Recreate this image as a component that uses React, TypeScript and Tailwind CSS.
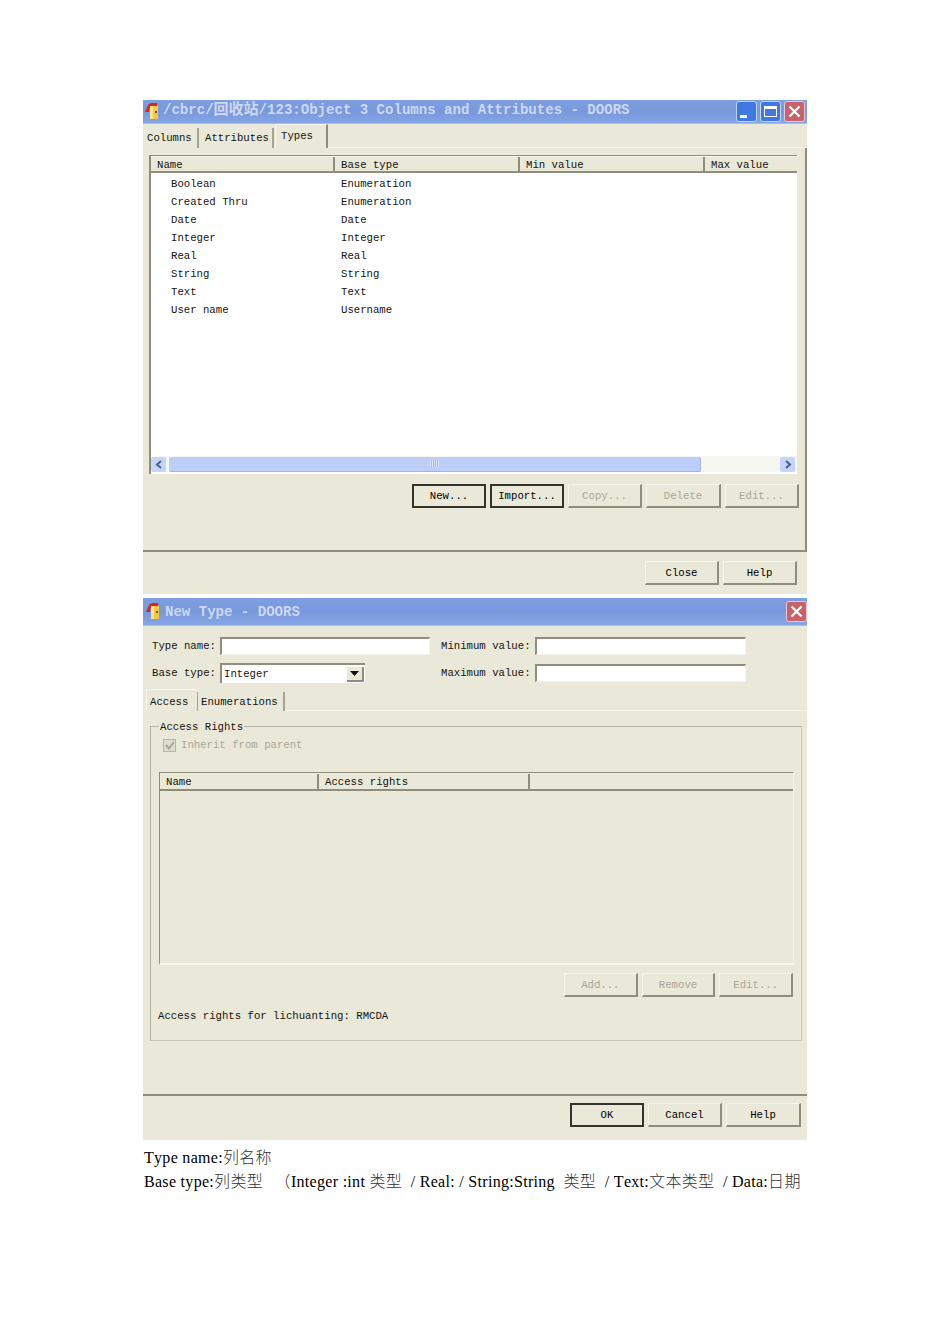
import type { ReactNode } from "react";

const listRows = [
  ["Boolean", "Enumeration"],
  ["Created Thru", "Enumeration"],
  ["Date", "Date"],
  ["Integer", "Integer"],
  ["Real", "Real"],
  ["String", "String"],
  ["Text", "Text"],
  ["User name", "Username"],
];

function DoorIcon() {
  return (
    <svg width="16" height="17" viewBox="0 0 16 17" className="shrink-0">
      <path d="M1 9 L4 2 Q5 0 8 0 L13 0 L13 3 L6 3 L5 9 Z" fill="#d8281c" />
      <rect x="6" y="3" width="8" height="13" fill="#f6c93f" />
      <rect x="6" y="3" width="3" height="13" fill="#fbe58a" />
      <rect x="11" y="8" width="2" height="2" fill="#7a4a10" />
    </svg>
  );
}

function TitleButton({ kind }: { kind: "min" | "max" | "close" }) {
  const color =
    kind === "close"
      ? "bg-[#c9626a] border-[#e8c8d0]"
      : "bg-[#3f78e0] border-[#c4d4f4]";
  return (
    <div className={`flex h-[21px] w-[21px] items-center justify-center rounded-[3px] border ${color}`}>
      {kind === "min" && <div className="mt-[9px] mr-[6px] h-[3px] w-[7px] bg-white" />}
      {kind === "max" && <div className="h-[11px] w-[13px] border border-t-[3px] border-white" />}
      {kind === "close" && (
        <svg width="13" height="13" viewBox="0 0 13 13">
          <path d="M1.5 1.5 L11.5 11.5 M11.5 1.5 L1.5 11.5" stroke="#fff" strokeWidth="2.2" />
        </svg>
      )}
    </div>
  );
}

function TitleBar({
  barClass,
  textClass,
  children,
  buttons,
}: {
  barClass: string;
  textClass: string;
  children: ReactNode;
  buttons: ReactNode;
}) {
  return (
    <div className={`flex ${barClass} items-center border-b border-[#a9bde8] bg-gradient-to-b from-[#7f9fe2] via-[#7898dd] to-[#86a5e6]`}>
      <DoorIcon />
      <div className={`${textClass} flex-1 whitespace-pre text-[14.05px] font-bold text-[#cdd8ef]`}>{children}</div>
      <div className="flex gap-[3px]">{buttons}</div>
    </div>
  );
}

function Btn({ label, state = "normal", w = "w-[74px]" }: { label: string; state?: "normal" | "default" | "disabled"; w?: string }) {
  const look =
    state === "default"
      ? "border-2 border-[#33332c] text-black"
      : state === "disabled"
        ? "border border-[#f6f5ec] border-r-2 border-b-2 border-r-[#8f8d7c] border-b-[#8f8d7c] text-[#a8a798]"
        : "border border-[#f6f5ec] border-r-2 border-b-2 border-r-[#8f8d7c] border-b-[#8f8d7c] text-black";
  return <div className={`flex h-[24px] ${w} items-center justify-center ${look}`}>{label}</div>;
}

function HeaderCell({ label, w }: { label: string; w: string }) {
  return (
    <div className={`${w} h-full border-r-2 border-[#8f8d7c] pl-[6px] leading-[17px] last:border-r-0`}>{label}</div>
  );
}

function TextInput({ w }: { w: string }) {
  return <div className={`h-[18px] ${w} border border-t-2 border-l-2 border-[#f6f5ec] border-t-[#8f8d7c] border-l-[#8f8d7c] bg-white`} />;
}

function Cjk({ children }: { children: ReactNode }) {
  return <span className="font-light text-[#333]">{children}</span>;
}

export default function App() {
  return (
    <div className="min-h-[1344px] bg-white pt-[100px] pl-[143px] font-['Liberation_Mono','Noto_Sans_CJK_SC',monospace] text-[10.67px] text-[#15150f]">
      {/* Object columns window */}
      <div className="h-[494px] w-[664px] bg-[#eae8d8]">
        <TitleBar
          barClass="h-[24px] pl-[1px] pr-[2px]"
          textClass="ml-[3px] pb-[5px]"
          buttons={
            <>
              <TitleButton kind="min" />
              <TitleButton kind="max" />
              <TitleButton kind="close" />
            </>
          }
        >
          /cbrc/<span className="font-['Noto_Sans_CJK_SC',sans-serif] text-[15px]">回收站</span>/123:Object 3 Columns and Attributes - DOORS
        </TitleBar>

        <div className="flex h-[24px] items-end pl-[4px]">
          <div className="flex h-[20px] w-[52px] items-center border-r-2 border-[#a5a392]">Columns</div>
          <div className="flex h-[20px] w-[75px] items-center border-r-2 border-l border-[#a5a392] border-l-transparent pl-[5px]">Attributes</div>
          <div className="ml-[1px] flex h-[24px] w-[53px] items-start border-t border-l border-r-2 border-[#f6f5ec] border-r-[#8f8d7c] pt-[3px] pl-[5px]">Types</div>
          <div className="h-px flex-1 bg-[#f6f5ec]" />
        </div>

        <div className="h-[404px] border-r-2 border-b-2 border-[#8f8d7c] pt-[7px] pl-[6px]">
          {/* Types list */}
          <div className="h-[319px] w-[648px] border-t border-l-2 border-[#8f8d7c] bg-white">
            <div className="flex h-[17px] border-t border-b-2 border-[#8f8d7c] border-t-[#f6f5ec] bg-[#eae8d8]">
              <HeaderCell label="Name" w="w-[184px]" />
              <HeaderCell label="Base type" w="w-[185px]" />
              <HeaderCell label="Min value" w="w-[185px]" />
              <HeaderCell label="Max value" w="flex-1" />
            </div>
            <div className="h-[283px] pt-[2px]">
              {listRows.map(([name, type]) => (
                <div key={name} className="flex h-[18px] items-center">
                  <div className="w-[190px] pl-[20px]">{name}</div>
                  <div>{type}</div>
                </div>
              ))}
            </div>
            {/* Horizontal scrollbar */}
            <div className="flex h-[16px] items-center bg-[#f7f7f2] pr-[2px]">
              <div className="flex h-[15px] w-[15px] items-center justify-center rounded-[2px] bg-[#c4d4fa]">
                <svg width="8" height="9" viewBox="0 0 8 9">
                  <path d="M6 1 L2 4.5 L6 8" fill="none" stroke="#4d6185" strokeWidth="2" />
                </svg>
              </div>
              <div className="ml-[3px] flex h-[15px] w-[532px] items-center justify-center rounded-[2px] border-r border-b border-[#9fb4e4] bg-[#bdcff8]">
                <div className="h-[7px] w-[9px] bg-[repeating-linear-gradient(90deg,#dbe5fb_0,#dbe5fb_1px,#a4b8e8_1px,#a4b8e8_2px)]" />
              </div>
              <div className="flex-1" />
              <div className="flex h-[15px] w-[15px] items-center justify-center rounded-[2px] bg-[#c4d4fa]">
                <svg width="8" height="9" viewBox="0 0 8 9">
                  <path d="M2 1 L6 4.5 L2 8" fill="none" stroke="#4d6185" strokeWidth="2" />
                </svg>
              </div>
            </div>
          </div>

          <div className="mt-[10px] ml-[263px] flex gap-[4px]">
            <Btn label="New..." state="default" />
            <Btn label="Import..." state="default" />
            <Btn label="Copy..." state="disabled" />
            <Btn label="Delete" state="disabled" w="w-[75px]" />
            <Btn label="Edit..." state="disabled" />
          </div>
        </div>

        <div className="mt-[9px] ml-[502px] flex gap-[4px]">
          <Btn label="Close" />
          <Btn label="Help" />
        </div>
      </div>

      {/* New type window */}
      <div className="mt-[4px] h-[542px] w-[664px] bg-[#eae8d8]">
        <TitleBar barClass="h-[28px] pl-[2px]" textClass="ml-[4px] pt-[3px]" buttons={<TitleButton kind="close" />}>
          New Type - DOORS
        </TitleBar>

        <div className="h-[63px]">
          <div className="flex pt-[11px] pl-[9px]">
            <div className="flex w-[289px] items-center">
              <div className="w-[68px]">Type name:</div>
              <TextInput w="w-[210px]" />
            </div>
            <div className="flex items-center">
              <div className="w-[94px]">Minimum value:</div>
              <TextInput w="w-[211px]" />
            </div>
          </div>
          <div className="mt-[8px] flex pl-[9px]">
            <div className="flex w-[289px] items-center">
              <div className="w-[68px]">Base type:</div>
              <div className="flex h-[20px] w-[145px] items-center justify-between border-t-2 border-l-2 border-[#8f8d7c] bg-white pl-[2px] pr-[1px]">
                <span>Integer</span>
                <div className="flex h-[15px] w-[17px] items-center justify-center border-r-2 border-b-2 border-[#8f8d7c] bg-[#eae8d8]">
                  <svg width="9" height="5" viewBox="0 0 9 5">
                    <path d="M0 0 H9 L4.5 5 Z" fill="#111" />
                  </svg>
                </div>
              </div>
            </div>
            <div className="flex items-center">
              <div className="w-[94px]">Maximum value:</div>
              <TextInput w="w-[211px]" />
            </div>
          </div>
        </div>

        <div className="flex h-[22px] items-end pl-[3px]">
          <div className="flex h-[22px] w-[50px] items-start border-t border-l border-[#f6f5ec] pt-[4px] pl-[3px]">Access</div>
          <div className="ml-[1px] flex h-[19px] w-[88px] items-center border-r-2 border-l border-[#a5a392] pl-[3px]">Enumerations</div>
          <div className="h-px flex-1 bg-[#f6f5ec]" />
        </div>

        {/* Access rights group */}
        <div className="relative mt-[15px] ml-[7px] h-[315px] w-[652px] border border-[#b8b6a4] border-r-[#c9c7b8] border-b-[#c9c7b8] px-[8px] pt-[10px]">
          <div className="absolute -top-[7px] left-[8px] bg-[#eae8d8] px-[1px] leading-[14px]">Access Rights</div>
          <div className="flex items-center pl-[4px] text-[#a8a798]">
            <div className="flex h-[13px] w-[13px] items-center justify-center border border-[#b8b6a4] bg-[#dedccb]">
              <svg width="10" height="9" viewBox="0 0 10 9">
                <path d="M1 4 L4 7.5 L9 1" fill="none" stroke="#a8a798" strokeWidth="2" />
              </svg>
            </div>
            <span className="ml-[5px]">Inherit from parent</span>
          </div>

          <div className="mt-[19px] h-[193px] w-[635px] border-t border-l border-r border-b-2 border-[#8f8d7c] border-r-[#f6f5ec] border-b-[#f6f5ec]">
            <div className="flex h-[18px] border-b-2 border-[#8f8d7c] pt-[1px]">
              <HeaderCell label="Name" w="w-[159px]" />
              <HeaderCell label="Access rights" w="w-[211px]" />
              <HeaderCell label="" w="flex-1" />
            </div>
          </div>

          <div className="mt-[8px] ml-[405px] flex gap-[4px]">
            <Btn label="Add..." state="disabled" />
            <Btn label="Remove" state="disabled" />
            <Btn label="Edit..." state="disabled" />
          </div>

          <div className="mt-[12px] -ml-px leading-[14px]">Access rights for lichuanting: RMCDA</div>
        </div>

        <div className="mt-[53px] h-[2px] bg-[#8f8d7c]" />
        <div className="mt-[7px] ml-[427px] flex gap-[4px]">
          <Btn label="OK" state="default" />
          <Btn label="Cancel" />
          <Btn label="Help" w="w-[75px]" />
        </div>
      </div>

      {/* Caption under the screenshots */}
      <div className="mt-[6px] w-[680px] whitespace-pre pl-px font-['Liberation_Serif','Noto_Sans_CJK_SC',serif] text-[16px] leading-[24px] tracking-[0.3px] text-black [font-kerning:none]">
        <div>Type name:<Cjk>列名称</Cjk></div>
        <div>
          Base type:<Cjk>列类型</Cjk>{"  "}<span className="ml-[3px] font-light text-[#333]">（</span>Integer :int <Cjk>类型</Cjk>{"  "}/ Real: / String:String{"  "}<Cjk>类型</Cjk>{"  "}/ Text:<Cjk>文本类型</Cjk>{"  "}/ Data:<Cjk>日期</Cjk>
        </div>
      </div>
    </div>
  );
}
